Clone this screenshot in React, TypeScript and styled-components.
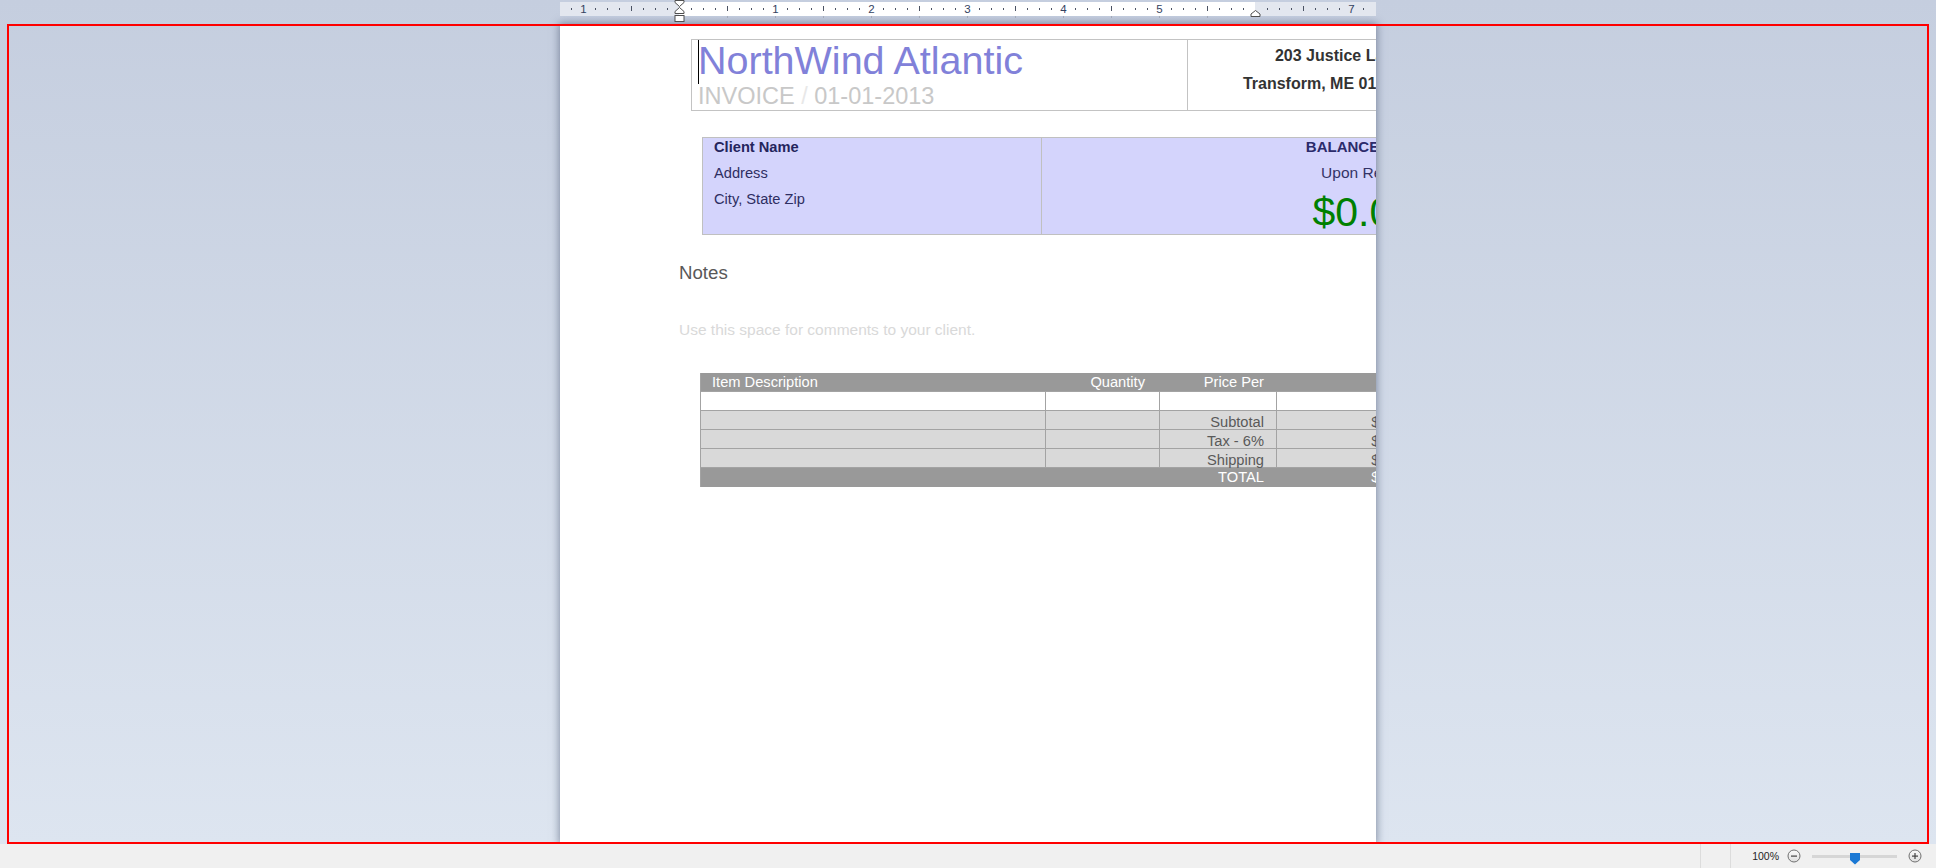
import React from "react";
import styled, { createGlobalStyle } from "styled-components";

const GlobalStyle = createGlobalStyle`
  html, body { margin: 0; padding: 0; }
  body {
    width: 1936px;
    height: 868px;
    overflow: hidden;
    font-family: "Liberation Sans", Arial, sans-serif;
    background: #f0f0f0;
  }
  #root { width: 1936px; height: 868px; }
`;

const Shell = styled.div`
  position: relative;
  width: 1936px;
  height: 868px;
  display: flex;
  flex-direction: column;
`;

const Workspace = styled.div`
  flex: 0 0 844px;
  height: 844px;
  display: flex;
  flex-direction: column;
  align-items: center;
  background: linear-gradient(180deg, #c5cedf 0%, #dde5f0 100%);
  overflow: hidden;
`;

const RulerRow = styled.div`
  position: relative;
  flex: none;
  width: 816px;
  height: 24px;
`;

const RulerBar = styled.div`
  position: absolute;
  left: 0;
  top: 2px;
  width: 816px;
  height: 14px;
  background: linear-gradient(
    90deg,
    #e3e7ef 0 119px,
    #ffffff 119px 695px,
    #e3e7ef 695px 816px
  );
`;

const RulerSvg = styled.svg`
  position: absolute;
  left: 0;
  top: 0;
  overflow: visible;
  font-family: "Liberation Sans", Arial, sans-serif;
`;

const Page = styled.div`
  flex: 1;
  width: 816px;
  box-sizing: border-box;
  background: #ffffff;
  box-shadow: 0 0 8px 1px rgba(62, 74, 104, 0.55);
  overflow: hidden;
  padding-left: 119px;
  display: flex;
  flex-direction: column;
  align-items: flex-start;
`;

/* ---------- header ---------- */
const HeaderBox = styled.div`
  flex: none;
  margin: 15px 0 0 12px;
  width: 719px;
  box-sizing: border-box;
  border: 1px solid #c3c3c3;
  display: grid;
  grid-template-columns: 495px 1fr;
`;

const Brand = styled.div`
  position: relative;
  padding: 1px 6px 2px;
  display: flex;
  flex-direction: column;
  gap: 5px;
  white-space: nowrap;
`;

const Caret = styled.span`
  position: absolute;
  left: 6px;
  top: 0;
  width: 1px;
  height: 44px;
  background: #000;
`;

const Company = styled.div`
  font-size: 39.5px;
  line-height: 39px;
  color: #8181d9;
`;

const InvoiceLine = styled.div`
  font-size: 23.5px;
  line-height: 23px;
  color: #c8c8c8;
`;

const Slash = styled.span`
  color: #e8e8e8;
`;

const Address = styled.div`
  border-left: 1px solid #c3c3c3;
  padding: 2px 6px 0 0;
  text-align: right;
  font-weight: bold;
  font-size: 16px;
  line-height: 28px;
  color: #333333;
  white-space: nowrap;
`;

/* ---------- client box ---------- */
const ClientBox = styled.div`
  flex: none;
  margin: 26px 0 0 23px;
  width: 724px;
  box-sizing: border-box;
  border: 1px solid #c0c0c0;
  background: #d4d4fc;
  display: grid;
  grid-template-columns: 338px 1fr;
`;

const ClientCol = styled.div`
  padding-left: 11px;
  display: flex;
  flex-direction: column;
  gap: 8px;
  white-space: nowrap;
`;

const ClientLine = styled.div<{ $strong?: boolean }>`
  font-size: 14.67px;
  line-height: 18px;
  font-weight: ${(p) => (p.$strong ? "bold" : "normal")};
  color: ${(p) => (p.$strong ? "#25255c" : "#2e2e62")};
`;

const BalanceCol = styled.div`
  border-left: 1px solid #c0c0c0;
  padding-right: 10px;
  display: flex;
  flex-direction: column;
  align-items: flex-end;
  white-space: nowrap;
`;

const BalanceLabel = styled.div`
  font-size: 15px;
  line-height: 18px;
  font-weight: bold;
  color: #2b2b6b;
`;

const Terms = styled.div`
  margin-top: 8px;
  font-size: 15.5px;
  line-height: 18px;
  color: #333366;
`;

const Amount = styled.div`
  margin-top: 8px;
  font-size: 41px;
  line-height: 44px;
  color: #008000;
`;

/* ---------- notes ---------- */
const NotesTitle = styled.div`
  flex: none;
  margin-top: 27px;
  font-size: 18.67px;
  line-height: 22px;
  color: #595959;
`;

const NotesHint = styled.div`
  flex: none;
  margin-top: 37px;
  font-size: 15.5px;
  line-height: 18px;
  color: #d9d9d9;
  white-space: nowrap;
`;

/* ---------- items table ---------- */
const ItemsTable = styled.div`
  flex: none;
  margin: 34px 0 0 21px;
  width: 721px;
  box-sizing: border-box;
  padding: 0 1px;
  background: #a3a3a3;
  display: flex;
  flex-direction: column;
  gap: 1px;
  font-size: 14.67px;
`;

type Tone = "head" | "blank" | "sum" | "total";

const Row = styled.div<{ $tone: Tone }>`
  display: grid;
  grid-template-columns: 344px 113px 116px 143px;
  grid-template-rows: ${(p) => (p.$tone === "total" ? 19 : 18)}px;
  column-gap: 1px;
  height: ${(p) => (p.$tone === "total" ? 19 : 18)}px;
  background: ${(p) =>
    p.$tone === "head" || p.$tone === "total" ? "#999999" : "transparent"};
`;

const Cell = styled.div<{ $tone: Tone; $align?: "left" | "right"; $pad?: number }>`
  box-sizing: border-box;
  min-height: 0;
  padding: ${(p) => (p.$tone === "sum" ? 2 : 0)}px ${(p) => p.$pad ?? 12}px 0
    ${(p) => (p.$align === "right" ? 0 : p.$pad ?? 11)}px;
  text-align: ${(p) => p.$align ?? "left"};
  white-space: nowrap;
  line-height: ${(p) => (p.$tone === "total" ? 19 : 18)}px;
  color: ${(p) => (p.$tone === "head" || p.$tone === "total" ? "#ffffff" : "#595959")};
  background: ${(p) =>
    p.$tone === "blank" ? "#ffffff" : p.$tone === "sum" ? "#d9d9d9" : "transparent"};
`;

/* ---------- status bar ---------- */
const StatusBar = styled.div`
  flex: 0 0 24px;
  height: 24px;
  background: #f0f0f0;
  display: flex;
  align-items: center;
  justify-content: flex-end;
  padding-right: 14px;
  box-sizing: border-box;
  font-size: 10.5px;
  color: #1e1e1e;
`;

const StatusDivider = styled.span<{ $gap: number }>`
  align-self: stretch;
  width: 1px;
  background: #dcdcdc;
  margin-right: ${(p) => p.$gap}px;
`;

const ZoomText = styled.span`
  margin-right: 8px;
`;

const ZoomBtn = styled.svg`
  display: block;
  flex: none;
`;

const Slider = styled.div`
  position: relative;
  width: 85px;
  height: 3px;
  margin: 0 11px;
  background: #d6d6d6;
`;

const Thumb = styled.svg`
  position: absolute;
  left: 38px;
  top: -2px;
  display: block;
`;

const RedFrame = styled.div`
  position: absolute;
  left: 7px;
  top: 24px;
  width: 1922px;
  height: 820px;
  box-sizing: border-box;
  border: 2px solid #ff0000;
  pointer-events: none;
`;

/* ---------- ruler drawing ---------- */
const ORIGIN = 119;

function RulerMarks() {
  const items: React.ReactNode[] = [];
  for (let k = -9; k <= 58; k++) {
    const x = ORIGIN + 12 * k;
    if (x < 3 || x > 813) continue;
    if (k % 8 === 0) {
      const n = Math.abs(k / 8);
      if (n === 0 || n === 6) continue;
      items.push(
        <text key={`n${k}`} x={x + 0.5} y={12.5} textAnchor="middle" fontSize="11.5" fill="#34425f">
          {n}
        </text>
      );
    } else if (k % 4 === 0) {
      items.push(<rect key={`h${k}`} x={x} y={6} width={1} height={5} fill="#4a5263" />);
    } else {
      items.push(<rect key={`d${k}`} x={x} y={8} width={1} height={2} fill="#4a5263" />);
    }
  }
  for (let k = 1; k <= 11; k++) {
    items.push(
      <rect key={`t${k}`} x={ORIGIN + 48 * k} y={16} width={1} height={2} fill="#a4abba" />
    );
  }
  return (
    <RulerSvg width={816} height={24} viewBox="0 0 816 24">
      {items}
      <g fill="#ffffff" stroke="#4f4f4f" strokeWidth={1}>
        <polygon points="115,0.5 124,0.5 124,2.5 119.5,6.5 115,2.5" />
        <polygon points="119.5,7.5 124,11.5 124,13.5 115,13.5 115,11.5" />
        <rect x={115} y={15.5} width={9} height={6} />
        <polygon points="695.5,10.5 700,14 700,16.5 691,16.5 691,14" />
      </g>
    </RulerSvg>
  );
}

function CircleButton({ plus }: { plus?: boolean }) {
  return (
    <ZoomBtn width={14} height={14} viewBox="0 0 14 14">
      <defs>
        <linearGradient id={plus ? "gp" : "gm"} x1="0" y1="0" x2="0" y2="1">
          <stop offset="0" stopColor="#fbfbfb" />
          <stop offset="1" stopColor="#dedede" />
        </linearGradient>
      </defs>
      <circle cx={7} cy={7} r={6} fill={`url(#${plus ? "gp" : "gm"})`} stroke="#707070" strokeWidth={1} />
      <rect x={4} y={6.5} width={6} height={1.2} fill="#444" />
      {plus && <rect x={6.4} y={4} width={1.2} height={6} fill="#444" />}
    </ZoomBtn>
  );
}

const summary = ["Subtotal", "Tax - 6%", "Shipping"];

export default function App() {
  return (
    <>
      <GlobalStyle />
      <Shell>
        <Workspace>
          <RulerRow>
            <RulerBar />
            <RulerMarks />
          </RulerRow>
          <Page>
            <HeaderBox>
              <Brand>
                <Caret />
                <Company>NorthWind Atlantic</Company>
                <InvoiceLine>
                  INVOICE <Slash>/</Slash> 01-01-2013
                </InvoiceLine>
              </Brand>
              <Address>
                <div>203 Justice Lane</div>
                <div>Transform, ME 01234</div>
              </Address>
            </HeaderBox>

            <ClientBox>
              <ClientCol>
                <ClientLine $strong>Client Name</ClientLine>
                <ClientLine>Address</ClientLine>
                <ClientLine>City, State Zip</ClientLine>
              </ClientCol>
              <BalanceCol>
                <BalanceLabel>BALANCE DUE</BalanceLabel>
                <Terms>Upon Receipt</Terms>
                <Amount>$0.00</Amount>
              </BalanceCol>
            </ClientBox>

            <NotesTitle>Notes</NotesTitle>
            <NotesHint>Use this space for comments to your client.</NotesHint>

            <ItemsTable>
              <Row $tone="head">
                <Cell $tone="head">Item Description</Cell>
                <Cell $tone="head" $align="right" $pad={14}>Quantity</Cell>
                <Cell $tone="head" $align="right">Price Per</Cell>
                <Cell $tone="head" $align="right"></Cell>
              </Row>
              <Row $tone="blank">
                <Cell $tone="blank" />
                <Cell $tone="blank" />
                <Cell $tone="blank" />
                <Cell $tone="blank" />
              </Row>
              {summary.map((label) => (
                <Row $tone="sum" key={label}>
                  <Cell $tone="sum" />
                  <Cell $tone="sum" />
                  <Cell $tone="sum" $align="right">{label}</Cell>
                  <Cell $tone="sum" $align="right">$0.00</Cell>
                </Row>
              ))}
              <Row $tone="total">
                <Cell $tone="total" />
                <Cell $tone="total" />
                <Cell $tone="total" $align="right">TOTAL</Cell>
                <Cell $tone="total" $align="right">$0.00</Cell>
              </Row>
            </ItemsTable>
          </Page>
        </Workspace>

        <StatusBar>
          <StatusDivider $gap={29} />
          <StatusDivider $gap={21} />
          <ZoomText>100%</ZoomText>
          <CircleButton />
          <Slider>
            <Thumb width={10} height={12} viewBox="0 0 10 12">
              <polygon points="0,0 10,0 10,7 5,11.5 0,7" fill="#1a78d4" />
            </Thumb>
          </Slider>
          <CircleButton plus />
        </StatusBar>

        <RedFrame />
      </Shell>
    </>
  );
}
